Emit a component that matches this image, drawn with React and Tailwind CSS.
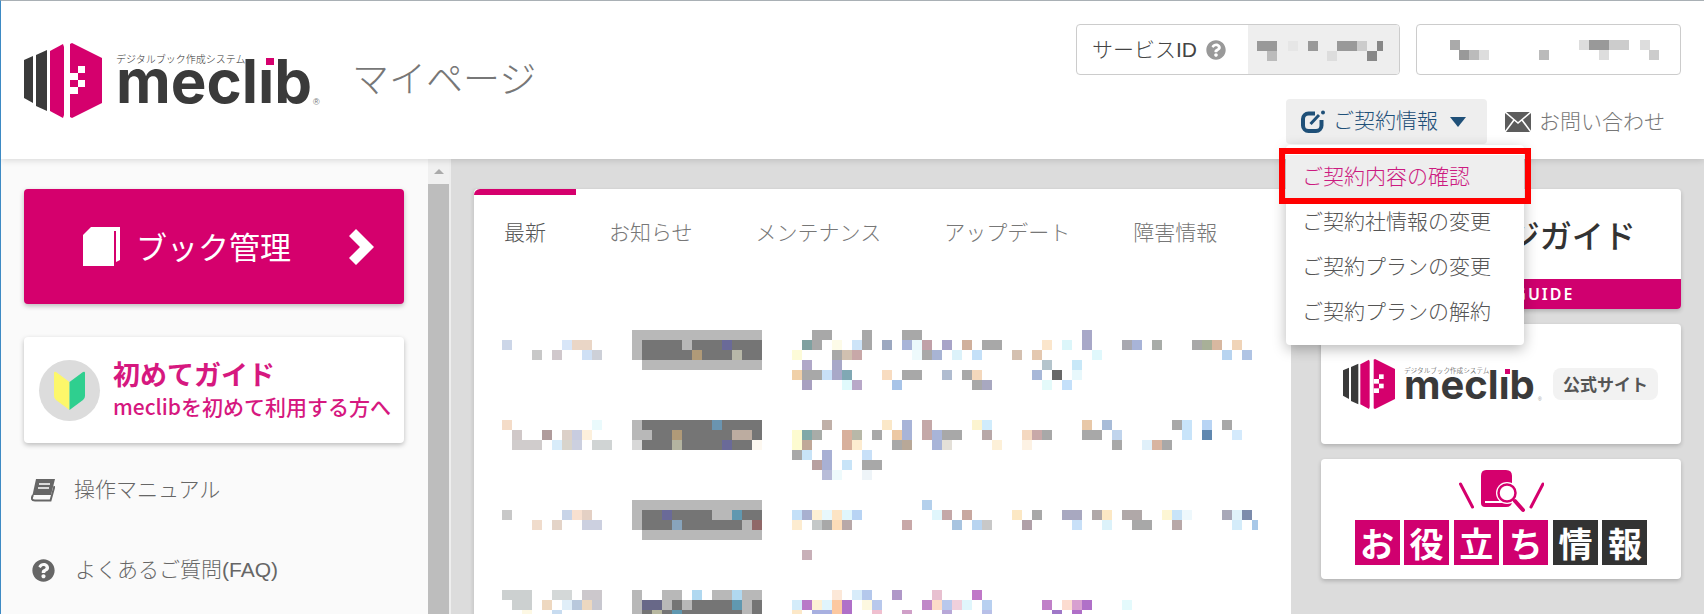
import React from "react";
import { FaQuestionCircle } from "react-icons/fa";

const g = "#a8a8a8", d = "#757575", b = "#b8b8b8", v = "#6a6a98";
const block = (y, list) => list.map(([x, c, w = 10, h = 10]) => [x, y, c, w, h]);

const rows = [
  {
    y: 330, h: 60, mt: "mt-0",
    date: [...block(340, [[502, "#ccd6e8"], [562, "#d8e6f8"], [572, "#ead6c6", 20]]), ...block(350, [[532, "#c8c8c8"], [552, "#d0c8cc"], [582, "#cfe0f5"], [592, "#cdd0d8"]])],
    badge: [...block(330, [[632, b, 130]]), ...block(340, [[632, b, 10, 20], [642, d, 120, 20], [682, b], [722, v]]), ...block(350, [[692, "#b09a78"], [732, "#b8b8a8"]]), ...block(360, [[642, b, 120]])],
    text: [
      ...block(330, [[812, g, 20], [862, g, 10, 20], [902, g, 20], [1082, "#a8a8c8", 10, 20]]),
      ...block(340, [[802, "#7fa0a0"], [812, g], [832, "#fdfbe8"], [852, "#cde4f8"], [882, "#9ca8c0"], [902, "#a8b4d8"], [912, "#eaf8fc"], [922, "#c0a0a8"], [942, "#a8a4c8"], [962, "#d0b09c"], [982, g, 20], [1042, "#fbe6cc"], [1062, "#dcf6fa"], [1122, "#a8a8b0"], [1132, "#a8b4d8"], [1152, "#a8aca8"], [1192, g], [1202, "#a8b098"], [1212, "#d8b8a0"], [1232, "#f0d4b8"]]),
      ...block(350, [[792, "#fdfbd8"], [832, g], [842, "#d0c0b0"], [852, "#c8a8a8"], [912, "#eefafc"], [922, g], [932, "#a8b4d4"], [952, "#dcf2fa"], [972, "#c4e0f8"], [1012, "#d4c0b0"], [1032, "#e4c8b0"], [1092, "#e0f8fc"], [1222, "#b8d4f0"], [1242, "#b0c4e4"]]),
      ...block(360, [[802, "#b0a8c8"], [832, "#a8a8c8"], [1042, "#b4c4cc"], [1072, "#c8e8f8"]]),
      ...block(370, [[792, "#f0d0a8"], [802, g, 20], [822, "#c8e0f8"], [832, "#a8a8c8"], [842, "#80a8b4"], [882, "#f8dcc0"], [902, g, 20], [942, "#b0bcd0"], [962, g], [972, "#f4d8bc"], [1032, "#a8b8d8"], [1052, "#686868"], [1072, "#e8f8fc"]]),
      ...block(380, [[802, "#a8a0c0"], [842, "#e0fafc"], [852, "#b8a8c8"], [892, "#a8c4e8"], [972, g], [982, "#a8a8c0"], [1042, "#e4fafa"], [1062, "#c4e0fa"]]),
    ],
  },
  {
    y: 420, h: 60, mt: "mt-[30px]",
    date: [...block(420, [[502, "#f4dcc8"], [592, "#eafafc"]]), ...block(430, [[512, "#d0c8c8"], [542, "#b09c9c"], [562, "#dcd0c8"], [572, "#c8cce0"], [582, "#fdf0dc"]]), ...block(440, [[512, "#d0cccc", 30], [552, "#d8ecfa"], [562, "#d8d4cc"], [572, "#ccd0e0"], [592, "#d0d4d4", 20]])],
    badge: [...block(420, [[642, d, 120, 30], [632, b], [712, "#6a94b0"]]), ...block(430, [[632, b, 20], [672, "#b09a78"], [732, "#bcaca0", 20]]), ...block(440, [[632, "#d8d8d8"], [672, "#b4b4a0"], [722, v], [752, "#fdf8f0"]])],
    text: [
      ...block(420, [[822, "#c0b0a8"], [882, "#fbe8c8"], [902, "#a8b4d8", 10, 20], [922, "#c4a8a8", 10, 20], [972, "#fcf4d0"], [982, "#d0ecfc"], [1082, "#e8c8a8"], [1102, "#a8bcd8"], [1172, g], [1182, "#c8e4fa", 10, 20], [1202, "#b8d4f4"], [1222, g]]),
      ...block(430, [[792, "#fdfbd0", 10, 20], [802, "#80a8a8"], [812, "#a8aca8"], [842, "#d8b09c", 10, 20], [852, "#b8b8a8"], [872, g], [892, "#ecc8a4"], [932, "#a8b4d8", 10, 20], [942, g, 20], [982, "#b8a8a8"], [1022, "#f4d8c0"], [1032, "#c8a8a8"], [1042, g], [1082, g, 20], [1112, "#c0d4ec"], [1202, "#6088b0"], [1232, "#d4eafc"]]),
      ...block(440, [[802, "#c0a898"], [852, "#fdecd0"], [892, g, 10], [902, "#b8a898"], [942, "#e4e0d8"], [992, "#fdf0d8"], [1022, "#fdf2e4"], [1112, g], [1142, "#e0f0fa"], [1152, "#d8b4a0"], [1162, g]]),
      ...block(450, [[792, g], [802, "#c8e4f8"], [822, "#a8b0d4"], [862, "#c8e0f8"]]),
      ...block(460, [[812, "#b8a0a0"], [822, "#a8b0d4"], [842, "#c8e4f8"], [862, g, 20]]),
      ...block(470, [[822, "#b8bcd8"], [832, "#eefafc"], [862, "#eef4f8"]]),
    ],
  },
  {
    y: 500, h: 60, mt: "mt-5",
    date: [...block(510, [[502, "#c8c8c8"], [562, "#c8d4e8"], [572, "#f8e0d0"], [582, "#e4d0c4"]]), ...block(520, [[532, "#f0dccc"], [552, "#e4d4c8"], [582, "#ccd0e0", 20]])],
    badge: [...block(500, [[632, b, 130]]), ...block(510, [[632, b, 10, 20], [642, d, 120, 20], [662, v], [712, b, 20], [732, "#6098b0"]]), ...block(520, [[672, "#88a4bc"], [742, b], [752, "#906868"]]), ...block(530, [[642, b, 120]])],
    text: [
      ...block(500, [[922, "#b4d0ec"]]),
      ...block(510, [[792, "#c4e0f8"], [802, "#a8b0d0"], [812, "#fdf0d4"], [822, "#e8f8fc"], [832, "#fce4c4"], [842, "#e0f6fc"], [852, "#b8d4f4"], [932, "#e0f6fc"], [942, "#c4a8a8"], [962, "#c8a8a0"], [1012, "#fce8c4"], [1032, g], [1062, "#a8a8c0", 20], [1092, "#b0a8a8"], [1102, "#fce8c4"], [1122, "#b0a8a8", 20], [1162, "#fdf6d4"], [1172, "#c8e4f8"], [1182, "#eef8fc"], [1222, "#a8a8b8"], [1232, "#e0f2fa"], [1242, "#7c8cac"]]),
      ...block(520, [[792, "#fdecd0"], [812, "#c4c8c8"], [822, g], [832, "#fcdcb8"], [842, "#b8a8a8"], [902, "#c8a8a8"], [952, "#a8c4e0"], [972, "#b8d4f0"], [982, "#c8c8c8"], [1022, "#b0a0a8"], [1072, "#c8e0f8"], [1102, "#dcf2fa"], [1132, g, 20], [1172, "#b8a8a8"], [1232, "#d4ecfa"], [1252, "#a8c8e8", 6]]),
      ...block(550, [[802, "#c8b0b8"]]),
    ],
  },
  {
    y: 590, h: 30, mt: "mt-[30px]",
    date: [...block(590, [[502, "#ccd0d0", 30], [552, "#d4d8d8", 20], [582, "#ccc8cc", 20]]), ...block(600, [[512, "#ccd0d0", 20], [542, "#eed8c0"], [562, "#e0eef8"], [572, "#b8c8dc"], [582, "#ecd8c0"], [592, "#c8c8d0"]]), ...block(610, [[522, "#fdf8e4"], [552, "#c8dcf0"]])],
    badge: [...block(590, [[632, b], [662, b, 20], [692, "#b0d8f0"], [712, b, 20], [732, "#b0d8f0"], [742, b, 20]]), ...block(600, [[632, b, 10, 20], [642, "#686888", 20], [662, b], [672, d], [682, b], [692, d, 40], [732, "#6098b0"], [742, b], [752, d]]), ...block(610, [[642, d], [652, "#b8b8a0"], [662, d], [672, "#6098b0"], [682, d, 60], [742, b], [752, d]])],
    text: [
      ...block(590, [[832, "#fce8d8"], [852, "#d8ecfa"], [862, "#b4c8ec"], [892, "#b098c8"], [932, "#e8c0d0"], [972, "#c078c8"]]),
      ...block(600, [[792, "#d4ecfa"], [802, "#b878c8"], [812, "#fdf0d4"], [822, "#e0f4fc"], [832, "#fcc8a0"], [842, "#b070c8"], [862, "#fdf8e0"], [872, "#b8c8ec"], [922, "#c088c8"], [932, "#fcdcc8"], [942, "#b8c8ec"], [952, "#f0d0dc"], [962, "#e0f6fc"], [982, "#b8d0f0"], [1042, "#c080c8"], [1062, "#fcdcd0"], [1072, "#d8a0d0"], [1082, "#b070c8"], [1122, "#e4fafc"]]),
      ...block(610, [[792, "#fce8c8"], [812, "#a8b0e0", 20], [832, "#fcc8a0"], [842, "#b070c8"], [872, "#f0c0d0"], [902, "#d0a0c8"], [942, "#b8a8d8"], [982, "#b8c0e8"], [1052, "#a078c8"], [1072, "#b070c8"]]),
    ],
  },
];

function Mosaic({ x, y, w, h, data, className = "" }) {
  return (
    <svg width={w} height={h} viewBox={`${x} ${y} ${w} ${h}`} shapeRendering="crispEdges" className={`block flex-none ${className}`}>
      {data.map(([rx, ry, c, rw, rh], i) => (
        <rect key={i} x={rx} y={ry} width={rw} height={rh} fill={c} />
      ))}
    </svg>
  );
}

function LogoMark({ className }) {
  return (
    <svg viewBox="24 43 78 75" className={className}>
      <polygon points="24,60 33,56 33,103 24,98" fill="#3a3a3a" />
      <polygon points="36,55 47,50 47,111 36,106" fill="#3a3a3a" />
      <polygon points="50,51 63,44 64,47 64,115 63,118 50,111" fill="#d5006d" />
      <polygon points="70,44 72,43 102,58 102,103 72,118 70,117" fill="#d5006d" />
      <rect x="78" y="66" width="7" height="7" fill="#fff" />
      <rect x="70" y="73" width="8" height="7" fill="#fff" />
      <rect x="78" y="80" width="7" height="7" fill="#fff" />
      <rect x="70" y="87" width="8" height="7" fill="#fff" />
    </svg>
  );
}

function Logo({ small }) {
  return (
    <div className={small ? "flex flex-none items-start gap-[9px]" : "flex flex-none items-start gap-[14px]"}>
      <LogoMark className={small ? "h-[50px] w-[52px] flex-none" : "h-[75px] w-[78px] flex-none"} />
      <div className={small ? "relative h-[50px] w-[139px]" : "relative h-[75px] w-[206px]"}>
        <div
          className={small
            ? "pt-[8px] text-[6.6px] leading-[7px] text-[#333] whitespace-nowrap"
            : "pt-[12px] text-[10px] leading-[10px] text-[#333] whitespace-nowrap"}
        >
          デジタルブック作成システム
        </div>
        <div
          className={small
            ? "font-['Inter',sans-serif] text-[40px] leading-[21px] font-bold text-[#3a3a3a] whitespace-nowrap"
            : "font-['Inter',sans-serif] text-[60px] leading-[32px] font-bold text-[#3a3a3a] whitespace-nowrap"}
        >
          meclıb
        </div>
        <span className={small ? "absolute left-[101px] top-[10px] h-[5px] w-[5px] bg-[#d5006d]" : "absolute left-[150px] top-[15px] h-[7px] w-[8px] bg-[#d5006d]"} />
        <span
          className={small
            ? "absolute left-[134px] top-[37px] text-[5px] leading-[6px] text-[#999]"
            : "absolute left-[197px] top-[54px] text-[9px] leading-[10px] text-[#777]"}
        >
          ®
        </span>
      </div>
    </div>
  );
}

function EditIcon() {
  return (
    <svg viewBox="0 0 25 23" className="h-[23px] w-[25px] flex-none">
      <path d="M14 3.5H7.5a5.5 5.5 0 0 0-5.5 5.5v6.5a5.5 5.5 0 0 0 5.5 5.5H15a5.5 5.5 0 0 0 5.5-5.5V10" fill="none" stroke="#1f5078" strokeWidth="4" />
      <path d="M9.5 14l8.5-9" stroke="#1f5078" strokeWidth="3" />
      <circle cx="22" cy="2.5" r="2" fill="#1f5078" />
    </svg>
  );
}

function MailIcon() {
  return (
    <svg viewBox="0 0 26 20" className="h-5 w-[26px] flex-none">
      <rect width="26" height="20" fill="#5c5c5c" />
      <path d="M0 0l13 11L26 0M0 20l9-12M26 20L17 8" fill="none" stroke="#fff" strokeWidth="1.6" />
    </svg>
  );
}

function BookIcon() {
  return (
    <svg viewBox="0 0 37 39" className="h-[39px] w-[37px] flex-none">
      <polygon points="0,8 8,0 37,0 37,33 33,35 33,4 31,4 31,39 0,39" fill="#fff" />
    </svg>
  );
}

function Chevron() {
  return (
    <svg viewBox="0 0 25 36" className="ml-[58px] h-9 w-[25px] flex-none">
      <polygon points="7,0 25,18 7,36 0,29 11,18 0,7" fill="#fff" />
    </svg>
  );
}

function ManualIcon() {
  return (
    <svg viewBox="0 0 24 23" className="h-[23px] w-6 flex-none">
      <polygon points="5,0 24,0 20,16 1.5,16" fill="#666" />
      <path d="M2 16Q-1 21.5 4 21.5H19.5L23.5 7" fill="none" stroke="#666" strokeWidth="2" />
      <path d="M8 5h11M7 9h11" stroke="#fff" strokeWidth="1.5" />
    </svg>
  );
}

function Beginner() {
  return (
    <div className="flex h-[61px] w-[61px] flex-none items-center justify-center rounded-full bg-[#dcdcdc]">
      <svg viewBox="0 0 31 39" className="h-[39px] w-[31px]">
        <path d="M0 2Q0 0 2 1L15.5 11V39L2 29Q0 27.5 0 25Z" fill="#fdf76a" />
        <path d="M31 2Q31 0 29 1L15.5 11V39L29 29Q31 27.5 31 25Z" fill="#2fcf8f" />
      </svg>
    </div>
  );
}

function InfoIcon() {
  return (
    <svg viewBox="1457 470 85 44" className="h-11 w-[85px]">
      <path d="M1458.5 484l12 23M1541 484l-12 23" stroke="#d5006d" strokeWidth="3" strokeLinecap="round" />
      <path d="M1484 470h20q6 0 6 6v25q0 6-6 6h-21q-4 0-4-4V476q0-6 5-6z" fill="#d5006d" />
      <path d="M1483 502h18" stroke="#fff" strokeWidth="2" />
      <circle cx="1505" cy="493" r="11" fill="#fff" />
      <circle cx="1505" cy="493" r="8.5" fill="#fff" stroke="#d5006d" strokeWidth="2.5" />
      <path d="M1513 501l8 9" stroke="#d5006d" strokeWidth="4" strokeLinecap="round" />
    </svg>
  );
}

const tile = "flex h-[45px] w-[45px] items-center justify-center text-[34px] leading-none font-bold text-white";
const tabs = ["最新", "お知らせ", "メンテナンス", "アップデート", "障害情報"];
const menu = ["ご契約社情報の変更", "ご契約プランの変更", "ご契約プランの解約"];

export default function App() {
  return (
    <div className="flex h-[614px] w-full flex-col overflow-hidden border-t border-l border-t-[#a9b0b5] border-l-[#3d8ac4] bg-white font-['Liberation_Sans','Noto_Sans_CJK_JP',sans-serif] text-[21px] font-light text-[#666]">
      <header className="relative z-10 flex h-[158px] flex-none justify-between bg-white pl-[23px] pr-[23px] shadow-[0_2px_6px_rgba(0,0,0,0.12)]">
        <div className="flex items-start pt-[42px]">
          <Logo />
          <div className="ml-[30px] mt-[11px] text-[37px] leading-[54px] text-[#777]">マイページ</div>
        </div>
        <div className="flex flex-col items-end pt-[23px]">
          <div className="flex gap-4">
            <div className="flex h-[51px] w-[324px] overflow-hidden rounded border border-[#ccc]">
              <div className="flex w-[171px] flex-none items-center pl-[15px] text-[#444]">
                サービスID
                <FaQuestionCircle className="ml-[9px] text-[20px] text-[#999]" />
              </div>
              <div className="flex-1 bg-[#eee]">
                <Mosaic x={1248} y={25} w={151} h={49} data={[...block(41, [[1257, "#999", 20], [1288, "#e6e6e6"], [1308, "#999"], [1337, "#999", 20], [1357, "#ccc"], [1377, "#888", 6]]), ...block(51, [[1267, "#bbb"], [1327, "#ddd"], [1367, "#888"]])]} />
              </div>
            </div>
            <div className="h-[51px] w-[265px] overflow-hidden rounded border border-[#ccc]">
              <Mosaic x={1417} y={25} w={263} h={49} data={[...block(40, [[1450, "#aaa"], [1579, "#ddd"], [1589, "#999", 20], [1609, "#ccc", 20], [1640, "#ddd"]]), ...block(50, [[1459, "#999"], [1469, "#bbb"], [1479, "#ddd"], [1539, "#bbb"], [1599, "#ddd"], [1649, "#ccc"]])]} />
            </div>
          </div>
          <nav className="mt-6 flex items-center gap-[18px] pr-4">
            <div className="relative">
              <div className="flex h-[45px] w-[201px] items-center rounded bg-[#eee] pl-[15px] text-[#1f5078]">
                <EditIcon />
                <span className="ml-[7px] pb-[2px]">ご契約情報</span>
                <svg viewBox="0 0 16 10" className="ml-[12px] h-[10px] w-4"><polygon points="0,0 16,0 8,10" fill="#1f5078" /></svg>
              </div>
              <div className="absolute left-0 top-full mt-px w-[238px] rounded bg-white py-[10px] text-[#555] shadow-[0_4px_14px_rgba(0,0,0,0.28)]">
                <div className="flex h-[45px] items-center bg-[#eee] pb-[2px] pl-4 text-[#cc1a80]">ご契約内容の確認</div>
                {menu.map((m) => (
                  <div key={m} className="flex h-[45px] items-center pb-[1px] pl-4">{m}</div>
                ))}
                <div className="absolute -left-[7px] top-[3px] h-[56px] w-[252px] border-[6px] border-[#f00]" />
              </div>
            </div>
            <div className="flex items-center gap-2 text-[#777]">
              <MailIcon />
              お問い合わせ
            </div>
          </nav>
        </div>
      </header>

      <div className="flex min-h-0 flex-1">
        <aside className="w-[427px] flex-none bg-[#fafafa] pl-[23px] pt-[30px]">
          <div className="flex h-[115px] w-[380px] items-center rounded bg-[#d5006d] pl-[59px] text-white shadow-[0_2px_5px_rgba(0,0,0,0.25)]">
            <BookIcon />
            <span className="ml-[16px] pt-[3px] text-[31px] leading-none font-normal">ブック管理</span>
            <Chevron />
          </div>
          <div className="mt-[33px] flex h-[106px] w-[380px] items-center rounded bg-white pl-[15px] shadow-[0_2px_5px_rgba(0,0,0,0.25)]">
            <Beginner />
            <div className="ml-[13px] pb-1 font-['Noto_Sans_CJK_JP',sans-serif] text-[#d6187f]">
              <div className="text-[27px] leading-[36px] font-bold">初めてガイド</div>
              <div className="text-[21px] leading-[28px] font-medium whitespace-nowrap">meclibを初めて利用する方へ</div>
            </div>
          </div>
          <div className="mt-[29px] flex h-9 items-center pl-[7px]">
            <ManualIcon />
            <span className="ml-[19px]">操作マニュアル</span>
          </div>
          <div className="mt-[44px] flex h-9 items-center pl-2">
            <FaQuestionCircle className="text-[23px] text-[#666]" />
            <span className="ml-[20px]">よくあるご質問(FAQ)</span>
          </div>
        </aside>

        <div className="flex w-[23px] flex-none flex-col border-r-2 border-r-[#eee] bg-[#f0f0f0]">
          <div className="flex h-[25px] flex-none items-center justify-center">
            <svg viewBox="0 0 10 5" className="h-[5px] w-[10px]"><polygon points="0,5 10,5 5,0" fill="#aaa" /></svg>
          </div>
          <div className="flex-1 bg-[#bdbdbd]" />
        </div>

        <main className="flex min-w-0 flex-1 gap-[30px] bg-[#dcdcdc] pl-[23px] pt-[30px]">
          <section className="relative h-[500px] w-[817px] flex-none rounded-t bg-white pl-[28px] shadow-[-2px_0_3px_rgba(0,0,0,0.08)]">
            <div className="absolute left-0 top-0 h-[6px] w-[102px] rounded-tl-md bg-[#d5006d]" />
            <div className="flex gap-[63px] pl-[2px] pt-[28px] leading-[32px]">
              {tabs.map((t, i) => (
                <div key={t} className={i === 0 ? "text-[#555]" : "text-[#777]"}>{t}</div>
              ))}
            </div>
            <div className="mt-[81px]">
              {rows.map((r) => (
                <div key={r.y} className={`flex ${r.mt}`}>
                  <Mosaic x={502} y={r.y} w={110} h={r.h} data={r.date} />
                  <Mosaic x={632} y={r.y} w={130} h={r.h} data={r.badge} className="ml-5" />
                  <Mosaic x={792} y={r.y} w={470} h={r.h} data={r.text} className="ml-[30px]" />
                </div>
              ))}
            </div>
          </section>

          <div className="flex w-[360px] flex-none flex-col gap-[15px]">
            <div className="flex h-[120px] flex-col overflow-hidden rounded bg-white shadow-[0_2px_4px_rgba(0,0,0,0.2)]">
              <div className="flex flex-1 items-center justify-center pl-[14px] font-['Noto_Sans_CJK_JP',sans-serif] text-[32px] font-medium text-[#333]">マイページガイド</div>
              <div className="flex h-[30px] flex-none items-center justify-center bg-[#d0006f] pl-1 font-['Noto_Sans',sans-serif] text-[16px] font-semibold tracking-[2px] text-white">MYPAGE GUIDE</div>
            </div>
            <div className="flex h-[120px] items-center gap-[10px] rounded bg-white pl-[22px] shadow-[0_2px_4px_rgba(0,0,0,0.2)]">
              <Logo small />
              <div className="flex h-8 w-[105px] items-center justify-center rounded-lg bg-[#f2f2f2] font-['Noto_Sans_CJK_JP',sans-serif] text-[17px] font-bold text-[#555]">公式サイト</div>
            </div>
            <div className="flex h-[120px] flex-col items-center rounded bg-white pt-[11px] shadow-[0_2px_4px_rgba(0,0,0,0.2)]">
              <InfoIcon />
              <div className="mt-[6px] flex gap-[4.6px] font-['Noto_Sans_CJK_JP',sans-serif]">
                <div className={`${tile} bg-[#d0006f]`}>お</div>
                <div className={`${tile} bg-[#d0006f]`}>役</div>
                <div className={`${tile} bg-[#d0006f]`}>立</div>
                <div className={`${tile} bg-[#d0006f]`}>ち</div>
                <div className={`${tile} bg-[#333]`}>情</div>
                <div className={`${tile} bg-[#333]`}>報</div>
              </div>
            </div>
          </div>
        </main>
      </div>
    </div>
  );
}
